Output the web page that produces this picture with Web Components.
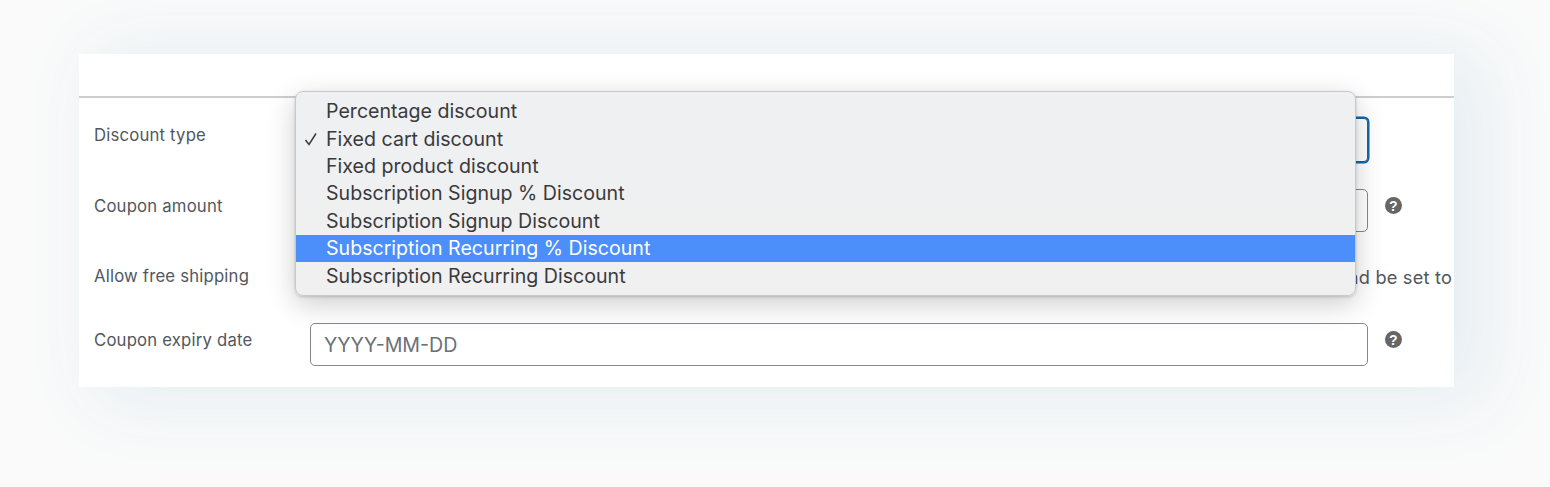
<!DOCTYPE html>
<html lang="en">
<head>
<meta charset="utf-8">
<title>Coupon data</title>
<style>
  html, body { margin: 0; height: 100%; overflow: hidden; background: #fafafa; }
  body { font-family: Inter, "Liberation Sans", sans-serif; color: #50575e; }
</style>
</head>
<body>
<coupon-card>
  <form-row label="Discount type">
    <select-box></select-box>
  </form-row>
  <form-row label="Coupon amount" help>
    <text-field></text-field>
  </form-row>
  <form-row label="Allow free shipping" compact>
    <span class="note">and be set to</span>
  </form-row>
  <form-row label="Coupon expiry date" help>
    <text-field placeholder="YYYY-MM-DD"></text-field>
  </form-row>
  <select-menu slot="overlay">
    <menu-option>Percentage discount</menu-option>
    <menu-option checked>Fixed cart discount</menu-option>
    <menu-option>Fixed product discount</menu-option>
    <menu-option>Subscription Signup % Discount</menu-option>
    <menu-option>Subscription Signup Discount</menu-option>
    <menu-option active>Subscription Recurring % Discount</menu-option>
    <menu-option>Subscription Recurring Discount</menu-option>
  </select-menu>
</coupon-card>

<script>
// small helper, every element gets the same open shadow setup
function shadow(el, html) {
  el.attachShadow({ mode: 'open' }).innerHTML = html
}

class CouponCard extends HTMLElement {
  constructor() {
    super()
    shadow(this, `
      <style>
        :host {
          display: block;
          position: relative;
          width: 1375px;
          margin: 54px 0 0 79px;
          background: #fff;
          box-shadow: 24px 6px 70px 10px #e6eef2;
        }
        .clip { overflow: hidden; }
        .head { height: 42px; border-bottom: 2px solid #cdcdd0; }
        .rows { padding: 20px 0 21px; display: flex; flex-direction: column; gap: 27px; }
      </style>
      <div class="clip">
        <div class="head"></div>
        <div class="rows"><slot></slot></div>
      </div>
      <slot name="overlay"></slot>
    `)
  }
}

class FormRow extends HTMLElement {
  constructor() {
    super()
    shadow(this, `
      <style>
        :host {
          display: grid;
          grid-template-columns: 231px 1058px 1fr;
          font-size: 16.7px;
          letter-spacing: .2px;
        }
        :host([compact]) { height: 37px; }
        .label { padding: 8px 0 0 15px; line-height: 18px; white-space: nowrap; color: #50575e; }
        .field { display: flex; min-width: 0; }
        ::slotted(.note) {
          margin-left: auto;
          margin-right: -84px;
          padding-top: 5.5px;
          line-height: 24px;
          white-space: nowrap;
          font-size: 18.2px;
        }
        .tip { padding: 8px 0 0 17px; }
      </style>
      <div class="label"></div>
      <div class="field"><slot></slot></div>
      <div class="tip"></div>
    `)
    this.shadowRoot.querySelector('.label').textContent = this.getAttribute('label')
    if (this.hasAttribute('help')) {
      this.shadowRoot.querySelector('.tip').append(document.createElement('help-tip'))
    }
  }
}

class TextField extends HTMLElement {
  constructor() {
    super()
    shadow(this, `
      <style>
        :host {
          display: flex;
          align-items: center;
          box-sizing: border-box;
          width: 100%;
          height: 43px;
          padding: 0 13px;
          background: #fff;
          border: 1px solid #85888d;
          border-radius: 5px;
          font-size: 19.6px;
          letter-spacing: 0;
          color: #6b7076;
        }
      </style>
      <span></span>
    `)
    this.shadowRoot.querySelector('span').textContent = this.getAttribute('placeholder') || ''
  }
}

class SelectBox extends HTMLElement {
  constructor() {
    super()
    shadow(this, `
      <style>
        :host {
          display: block;
          box-sizing: border-box;
          width: 100%;
          height: 44px;
          background: #fff;
          border: 1px solid #1564a8;
          border-radius: 4px;
          box-shadow: 0 0 0 1.5px #1564a8;
        }
      </style>
    `)
  }
}

class SelectMenu extends HTMLElement {
  constructor() {
    super()
    shadow(this, `
      <style>
        :host {
          display: block;
          position: absolute;
          left: 216px;
          top: 37px;
          box-sizing: border-box;
          width: 1061px;
          height: 205px;
          padding: 5.6px 0 0;
          background: linear-gradient(#eff0f2, #f0f0f0);
          border: 1px solid #c9c9cb;
          border-radius: 8px;
          box-shadow: 0 8px 28px rgba(0, 0, 0, .2), 0 1px 3px rgba(0, 0, 0, .18);
        }
      </style>
      <slot></slot>
    `)
  }
}

class MenuOption extends HTMLElement {
  constructor() {
    super()
    shadow(this, `
      <style>
        :host {
          display: flex;
          align-items: center;
          height: 27.4px;
          padding-left: 30px;
          position: relative;
          font-size: 19.6px;
          color: #3a3a3c;
          white-space: nowrap;
        }
        :host([active]) { background: #4c8ffa; color: #fff; }
        svg { position: absolute; left: 8px; top: 7px; }
      </style>
      <slot></slot>
    `)
    if (this.hasAttribute('checked')) {
      this.shadowRoot.innerHTML += `
        <svg width="14" height="14" viewBox="0 0 14 14" fill="none" stroke="#3a3a3c" stroke-width="1.5">
          <path d="M1.5 8 L5 12.5 L12 1.5"/>
        </svg>`
    }
  }
}

class HelpTip extends HTMLElement {
  constructor() {
    super()
    shadow(this, `
      <style>
        :host {
          display: flex;
          align-items: center;
          justify-content: center;
          width: 17px;
          height: 17px;
          border-radius: 50%;
          background: #666;
          color: #fff;
          font: bold 14px "Liberation Sans", sans-serif;
        }
      </style>
      ?
    `)
  }
}

customElements.define('coupon-card', CouponCard)
customElements.define('form-row', FormRow)
customElements.define('text-field', TextField)
customElements.define('select-box', SelectBox)
customElements.define('select-menu', SelectMenu)
customElements.define('menu-option', MenuOption)
customElements.define('help-tip', HelpTip)
</script>
</body>
</html>
